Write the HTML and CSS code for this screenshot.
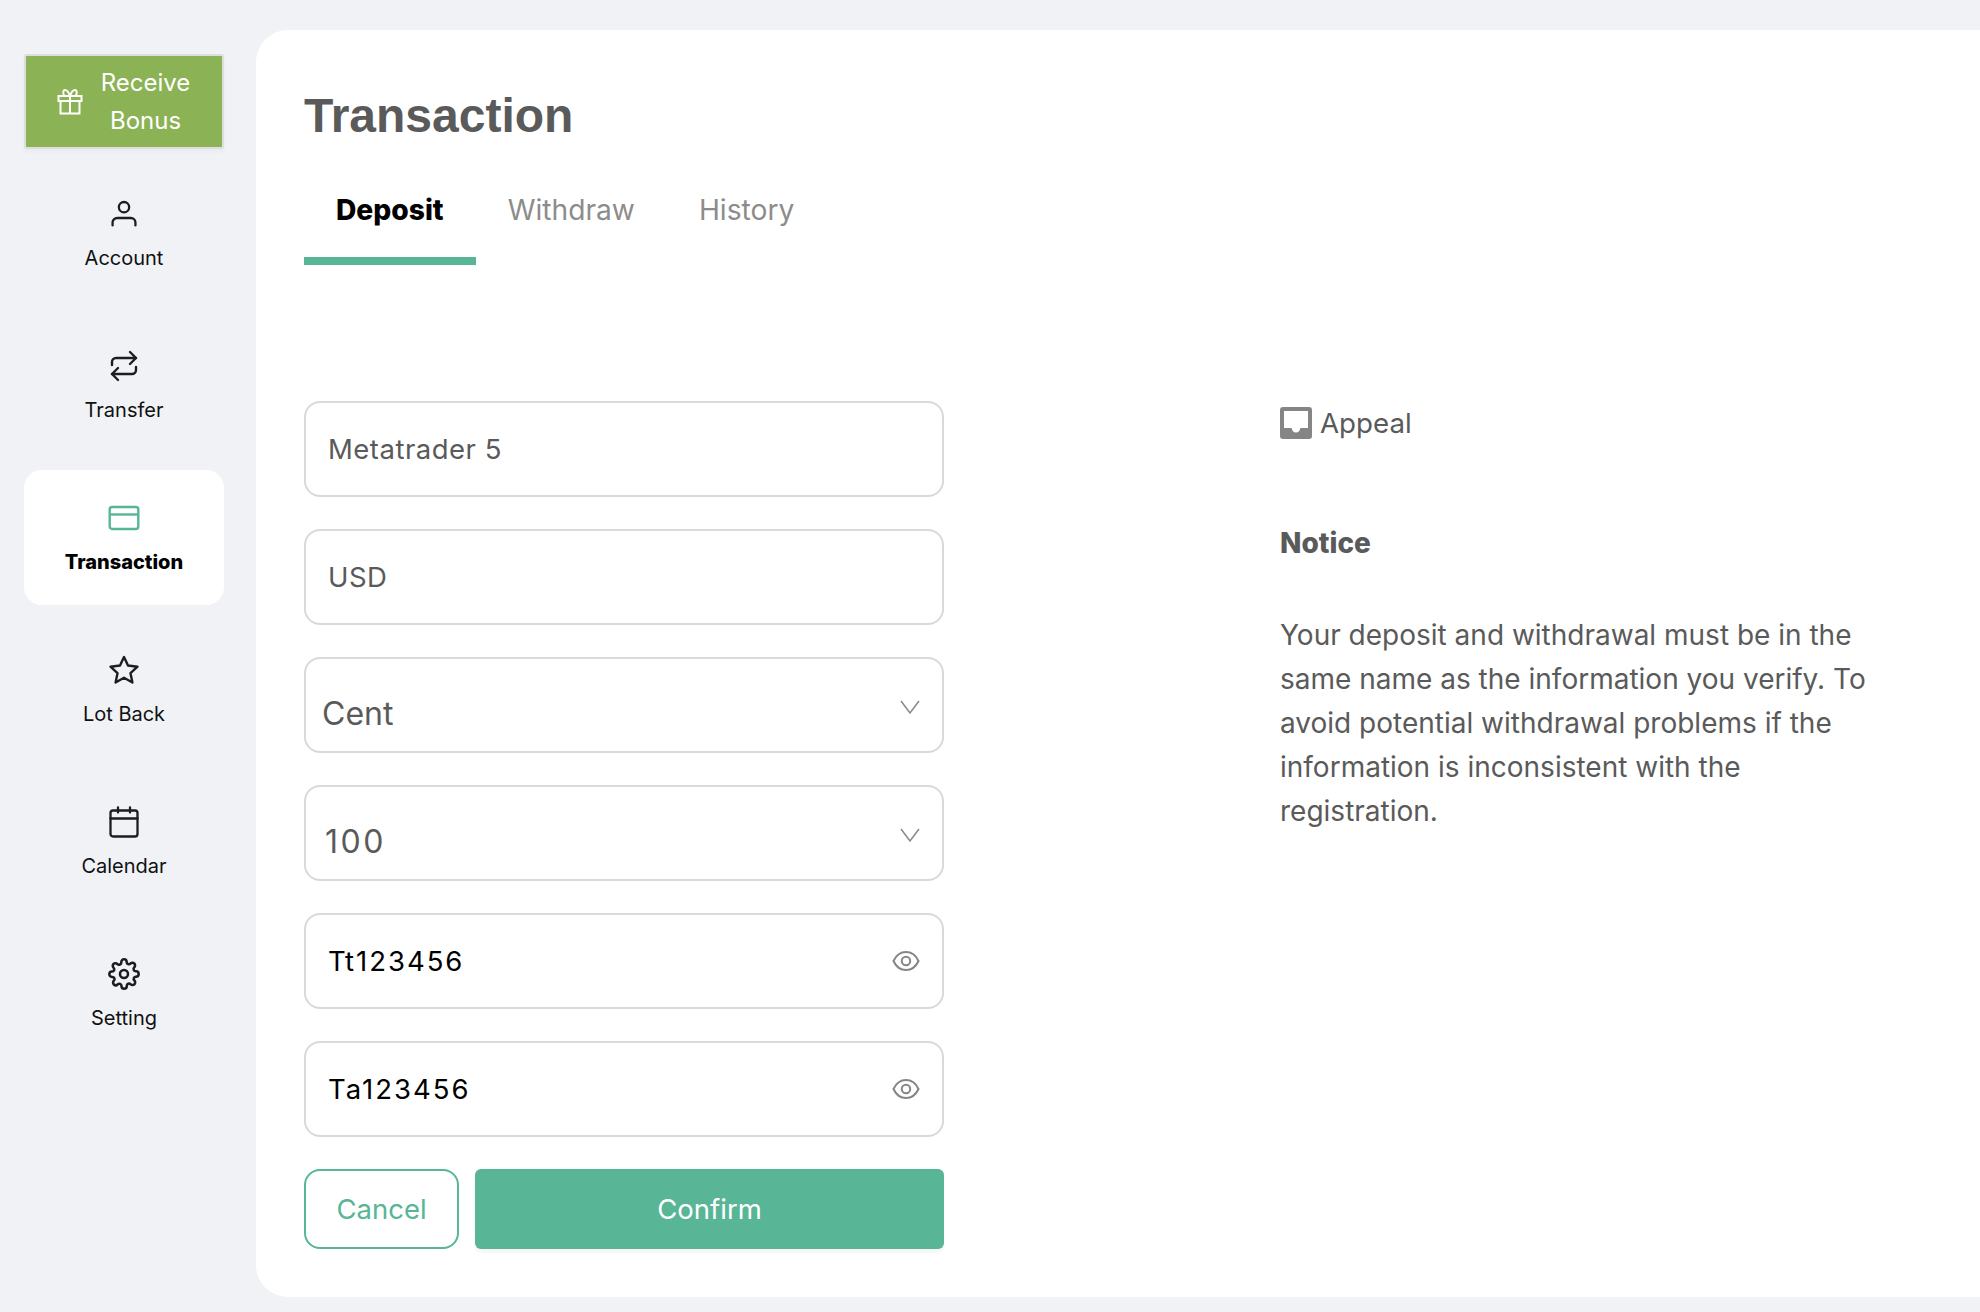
FILE: index.html
```html
<!DOCTYPE html>
<html lang="en">
<head>
<meta charset="utf-8">
<title>Transaction</title>
<link rel="stylesheet" href="styles.css">
</head>
<body>
<div class="app">
  <nav class="sidebar">
    <a class="bonus">
      <svg class="bonus-icon" viewBox="0 0 26 26" fill="none" stroke="#fff" stroke-width="2"><rect x="1.500" y="7" width="23" height="5"/><rect x="3.500" y="12" width="19" height="12.500"/><path d="M13 7v17.500M13 7c-1-3-3-6-5-6S5.500 4.500 7.500 7M13 7c1-3 3-6 5-6s2.500 3.500 .5 6"/></svg>
      <span class="bonus-text">Receive<br>Bonus</span>
    </a>
    <a class="nav-item">
      <svg class="nav-icon" viewBox="-2 -2 28 28" fill="none" stroke="#1d1d1f" stroke-width="2" stroke-linecap="round"><circle cx="12" cy="6" r="4.500"/><path d="M2 22v-2.500A4 4 0 0 1 6 15.500h12a4 4 0 0 1 4 4V22"/></svg>
      <span>Account</span>
    </a>
    <a class="nav-item">
      <svg class="nav-icon" viewBox="0 0 28 32" fill="none" stroke="#1d1d1f" stroke-width="2.400" stroke-linecap="round" stroke-linejoin="round"><path d="M20 2l6 6-6 6"/><path d="M2 15v-3a4 4 0 0 1 4-4h20"/><path d="M8 30l-6-6 6-6"/><path d="M26 17v3a4 4 0 0 1-4 4H2"/></svg>
      <span>Transfer</span>
    </a>
    <a class="nav-item active">
      <svg class="nav-icon" viewBox="0 0 32 32" fill="none" stroke="#58b595" stroke-width="2.400"><rect x="1.700" y="5" width="28.600" height="22" rx="2.500"/><path d="M1.700 12.500h28.600"/></svg>
      <span>Transaction</span>
    </a>
    <a class="nav-item">
      <svg class="nav-icon" viewBox="0 0 32 32" fill="none" stroke="#1d1d1f" stroke-width="2.400" stroke-linejoin="round"><path d="M16 3l4 8.500 9.500 1.200-7 6.500 1.900 9.300L16 23.800 7.600 28.500l1.900-9.300-7-6.500L12 11.500z"/></svg>
      <span>Lot Back</span>
    </a>
    <a class="nav-item">
      <svg class="nav-icon" viewBox="0 0 32 32" fill="none" stroke="#1d1d1f" stroke-width="2.300" stroke-linecap="round"><rect x="2.500" y="4.500" width="27" height="26" rx="2.500"/><path d="M2.500 12.500h27M10 1.500v5M22 1.500v5"/></svg>
      <span>Calendar</span>
    </a>
    <a class="nav-item">
      <svg class="nav-icon" viewBox="0 0 24 24" fill="none" stroke="#1d1d1f" stroke-width="1.900" stroke-linecap="round" stroke-linejoin="round"><circle cx="12" cy="12" r="3"/><path d="M19.400 15a1.650 1.650 0 0 0 .33 1.820l.06.06a2 2 0 1 1-2.830 2.830l-.06-.06a1.650 1.650 0 0 0-2.800 1.170V21a2 2 0 1 1-4 0v-.09a1.650 1.650 0 0 0-2.820-1.110l-.06.06a2 2 0 1 1-2.830-2.830l.06-.06a1.650 1.650 0 0 0-1.170-2.800H3a2 2 0 1 1 0-4h.09a1.650 1.650 0 0 0 1.110-2.820l-.06-.06a2 2 0 1 1 2.830-2.830l.06.06a1.650 1.650 0 0 0 1.820.33H9a1.650 1.650 0 0 0 1-1.510V3a2 2 0 1 1 4 0v.09a1.650 1.650 0 0 0 2.820 1.110l.06-.06a2 2 0 1 1 2.830 2.830l-.06.06a1.650 1.650 0 0 0-.33 1.820V9a1.650 1.650 0 0 0 1.510 1H21a2 2 0 1 1 0 4h-.09a1.650 1.650 0 0 0-1.510 1z"/></svg>
      <span>Setting</span>
    </a>
  </nav>

  <main class="panel">
    <h1 class="title">Transaction</h1>
    <div class="tabs">
      <a class="tab current">Deposit</a>
      <a class="tab">Withdraw</a>
      <a class="tab">History</a>
    </div>

    <div class="content">
      <form class="form">
        <div class="field">Metatrader 5</div>
        <div class="field">USD</div>
        <div class="field select select-cent">
          <span>Cent</span>
          <svg class="chevron" viewBox="0 0 20 14" fill="none" stroke="#8a8a8a" stroke-width="1.500"><path d="M1 1l9 12 9-12"/></svg>
        </div>
        <div class="field select select-num">
          <span>100</span>
          <svg class="chevron" viewBox="0 0 20 14" fill="none" stroke="#8a8a8a" stroke-width="1.500"><path d="M1 1l9 12 9-12"/></svg>
        </div>
        <div class="field secret">
          <span>Tt123456</span>
          <svg class="eye" viewBox="0 0 28 22" fill="none" stroke="#858585" stroke-width="2"><path d="M1.500 11C4.500 4.500 9 2 14 2s9.500 2.500 12.500 9C23.500 17.500 19 20 14 20S4.500 17.500 1.500 11z"/><circle cx="14" cy="11" r="4.200"/></svg>
        </div>
        <div class="field secret">
          <span>Ta123456</span>
          <svg class="eye" viewBox="0 0 28 22" fill="none" stroke="#858585" stroke-width="2"><path d="M1.500 11C4.500 4.500 9 2 14 2s9.500 2.500 12.500 9C23.500 17.500 19 20 14 20S4.500 17.500 1.500 11z"/><circle cx="14" cy="11" r="4.200"/></svg>
        </div>
        <div class="actions">
          <a class="btn cancel">Cancel</a>
          <a class="btn confirm">Confirm</a>
        </div>
      </form>

      <aside class="side">
        <div class="appeal">
          <svg class="appeal-icon" viewBox="0 0 32 32"><path fill="#858585" fill-rule="evenodd" d="M3 0h26a3 3 0 0 1 3 3v26a3 3 0 0 1-3 3H3a3 3 0 0 1-3-3V3a3 3 0 0 1 3-3zm1 4v17h7.500c1 3 2 4.500 4.500 4.500s3.500-1.500 4.500-4.500H28V4z"/></svg>
          <span>Appeal</span>
        </div>
        <h2 class="notice-title">Notice</h2>
        <p class="notice">Your deposit and withdrawal must be in the same name as the information you verify. To avoid potential withdrawal problems if the information is inconsistent with the registration.</p>
      </aside>
    </div>
  </main>
</div>
</body>
</html>
```

FILE: styles.css
```css
* { box-sizing: border-box; }
html, body { margin: 0; height: 100%; }
body {
  background: #f0f2f6;
  font-family: Inter, "Liberation Sans", sans-serif;
  overflow: hidden;
}
.app {
  display: flex;
  width: 1980px;
  height: 1312px;
  padding-top: 30px;
  padding-bottom: 15px;
}

/* sidebar */
.sidebar {
  width: 256px;
  flex: none;
  padding: 24px 32px 0 24px;
  display: flex;
  flex-direction: column;
  align-items: stretch;
}
.bonus {
  display: flex;
  align-items: center;
  height: 95px;
  margin: 0 0 17px 0;
  background: #8bb355;
  border: 2px solid #dcdfdc;
  border-radius: 3px;
  box-shadow: 0 3px 4px rgba(0,0,0,.03);
  color: #fff;
  padding-left: 31px;
}
.bonus-icon { width: 26px; height: 26px; flex: none; }
.bonus-text {
  flex: 1;
  text-align: center;
  font-size: 24px;
  line-height: 38px;
  padding-right: 14px;
}
.nav-item {
  height: 135px;
  margin-bottom: 17px;
  border-radius: 18px;
  display: flex;
  flex-direction: column;
  align-items: center;
  padding-top: 32px;
  color: #111;
  font-size: 20px;
  line-height: 26px;
}
.nav-icon { width: 32px; height: 32px; margin-bottom: 15px; }
.nav-item.active { background: #fff; font-weight: 800; color: #000; }

/* panel */
.panel {
  flex: 1;
  background: #fff;
  border-radius: 32px 0 0 32px;
  padding: 56px 0 0 48px;
  color: #5a5a5a;
}
.title {
  margin: 0;
  font-family: "Liberation Sans", Arial, sans-serif;
  font-size: 48px;
  line-height: 60px;
  font-weight: 700;
}
.tabs {
  display: flex;
  margin-top: 37px;
  font-size: 28.200px;
  height: 82px;
}
.tab {
  padding: 10px 32px 0;
  color: #8c8c8c;
  line-height: 34px;
}
.tab.current {
  color: #000;
  font-weight: 800;
  border-bottom: 8px solid #58b595;
}
.content {
  display: flex;
  margin-top: 136px;
}
.form {
  width: 640px;
  flex: none;
  display: flex;
  flex-direction: column;
  gap: 32px;
}
.field {
  height: 96px;
  border: 2px solid #d9d9d9;
  border-radius: 16px;
  padding: 0 22px;
  display: flex;
  align-items: center;
  justify-content: space-between;
  font-size: 27.500px;
  letter-spacing: .5px;
  background: #fff;
}
.select { font-size: 32px; padding: 17px 22px 0 16px; letter-spacing: 0; position: relative; }
.select-num { padding-left: 19px; letter-spacing: 2.500px; }
.chevron { width: 20px; height: 14px; position: absolute; right: 22px; top: 41px; }
.secret { color: #000; letter-spacing: 2px; }
.eye { width: 28px; height: 22px; }
.actions {
  display: flex;
  gap: 16px;
  height: 80px;
}
.btn {
  display: flex;
  align-items: center;
  justify-content: center;
  font-size: 27.500px;
}
.cancel {
  width: 155px;
  border: 2px solid #58b595;
  border-radius: 16px;
  color: #58b595;
}
.confirm {
  flex: 1;
  background: #58b595;
  border-radius: 6px;
  color: #fff;
  box-shadow: 0 4px 3px rgba(0,0,0,.04);
}

.side {
  margin-left: 336px;
  width: 600px;
  flex: none;
}
.appeal {
  display: flex;
  align-items: center;
  gap: 8px;
  font-size: 27.700px;
  line-height: 40px;
  margin-top: 2px;
}
.appeal-icon { width: 32px; height: 32px; flex: none; }
.notice-title {
  margin: 80px 0 0;
  font-size: 28px;
  line-height: 40px;
  font-weight: 800;
}
.notice {
  margin: 50px 0 0;
  font-size: 28px;
  line-height: 44px;
}
```
